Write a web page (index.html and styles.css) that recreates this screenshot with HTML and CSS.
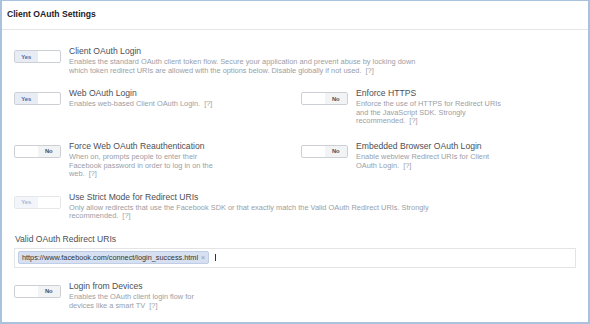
FILE: index.html
```html
<!DOCTYPE html>
<html>
<head>
  <meta charset="UTF-8">
  <title>Client OAuth Settings</title>
  <link rel="stylesheet" href="styles.css">
</head>
<body>

<div class="panel">
  <div class="panel-head">Client OAuth Settings</div>
  <div class="panel-body">

    <div class="setting">
      <div class="toggle"><span class="on">Yes</span><span></span></div>
      <div class="info">
        <div class="title">Client OAuth Login</div>
        <div class="desc">Enables the standard OAuth client token flow. Secure your application and prevent abuse by locking down which token redirect URIs are allowed with the options below. Disable globally if not used. <span class="help">[?]</span></div>
      </div>
    </div>

    <div class="grid">
      <div class="setting">
        <div class="toggle"><span class="on">Yes</span><span></span></div>
        <div class="info">
          <div class="title">Web OAuth Login</div>
          <div class="desc half">Enables web-based Client OAuth Login. <span class="help">[?]</span></div>
        </div>
      </div>
      <div class="setting">
        <div class="toggle"><span></span><span class="off">No</span></div>
        <div class="info">
          <div class="title">Enforce HTTPS</div>
          <div class="desc half">Enforce the use of HTTPS for Redirect URIs and the JavaScript SDK. Strongly recommended. <span class="help">[?]</span></div>
        </div>
      </div>
      <div class="setting">
        <div class="toggle"><span></span><span class="off">No</span></div>
        <div class="info">
          <div class="title">Force Web OAuth Reauthentication</div>
          <div class="desc half">When on, prompts people to enter their Facebook password in order to log in on the web. <span class="help">[?]</span></div>
        </div>
      </div>
      <div class="setting">
        <div class="toggle"><span></span><span class="off">No</span></div>
        <div class="info">
          <div class="title">Embedded Browser OAuth Login</div>
          <div class="desc half">Enable webview Redirect URIs for Client OAuth Login. <span class="help">[?]</span></div>
        </div>
      </div>
    </div>

    <div class="setting">
      <div class="toggle disabled"><span class="on">Yes</span><span></span></div>
      <div class="info">
        <div class="title">Use Strict Mode for Redirect URIs</div>
        <div class="desc">Only allow redirects that use the Facebook SDK or that exactly match the Valid OAuth Redirect URIs. Strongly recommended. <span class="help">[?]</span></div>
      </div>
    </div>

    <div class="field">
      <div class="label">Valid OAuth Redirect URIs</div>
      <div class="token-input">
        <span class="token">https://www.facebook.com/connect/login_success.html <span class="remove">×</span></span>
        <span class="caret"></span>
      </div>
    </div>

    <div class="setting">
      <div class="toggle"><span></span><span class="off">No</span></div>
      <div class="info">
        <div class="title">Login from Devices</div>
        <div class="desc half">Enables the OAuth client login flow for devices like a smart TV <span class="help">[?]</span></div>
      </div>
    </div>

  </div>
</div>

</body>
</html>
```

FILE: styles.css
```css
html, body {
  margin: 0;
  padding: 0;
  background: #fff;
  font-family: "Liberation Sans", Arial, sans-serif;
}

.panel {
  width: 590px;
  height: 324px;
  box-sizing: border-box;
  border: 2px solid #a9c3df;
  border-top-width: 1px;
  overflow: hidden;
}

.panel-head {
  height: 28px;
  line-height: 27px;
  padding-left: 5px;
  border-bottom: 1px solid #e5e6e9;
  font-size: 8.6px;
  font-weight: bold;
  color: #1d2129;
}

.panel-body {
  display: flex;
  flex-direction: column;
  gap: 13px;
  padding: 16px 12px 0 12px;
}

.grid {
  display: grid;
  grid-template-columns: 287px 1fr;
  row-gap: 15px;
}

.setting {
  display: flex;
  align-items: flex-start;
  gap: 8px;
}

.toggle {
  flex: none;
  display: flex;
  width: 47px;
  height: 13px;
  margin-top: 4px;
  box-sizing: border-box;
  border: 1px solid #ccd0d5;
  border-radius: 2px;
  overflow: hidden;
  background: #fff;
}

.toggle span {
  flex: 1;
  display: flex;
  align-items: center;
  justify-content: center;
  font-size: 5.8px;
  font-weight: bold;
}

.toggle .on {
  background: #e7ecf5;
  color: #4a67a8;
}

.toggle .off {
  background: #f2f3f5;
  color: #4b4f56;
}

.toggle.disabled {
  opacity: 0.5;
}

.title {
  font-size: 8.6px;
  line-height: 10px;
  color: #4b4f56;
}

.desc {
  margin-top: 2px;
  max-width: 362px;
  font-size: 7.4px;
  line-height: 8.6px;
  color: #9a9ea6;
}

.desc.half {
  max-width: 150px;
}

.help {
  margin-left: 2px;
}

.label {
  padding-left: 1px;
  margin-bottom: 4px;
  font-size: 8.6px;
  line-height: 10px;
  color: #4b4f56;
}

.token-input {
  display: flex;
  align-items: center;
  gap: 6px;
  height: 20px;
  box-sizing: border-box;
  padding-left: 3px;
  border: 1px solid #e3e4e6;
  background: #fff;
}

.token {
  display: flex;
  align-items: center;
  gap: 3px;
  height: 13px;
  box-sizing: border-box;
  padding: 0 3px;
  border: 1px solid #bfcde6;
  border-radius: 2px;
  background: #d6e0f0;
  font-size: 7.3px;
  color: #333;
}

.token .remove {
  color: #8d9bb3;
}

.caret {
  width: 1px;
  height: 7px;
  background: #333;
}
```
